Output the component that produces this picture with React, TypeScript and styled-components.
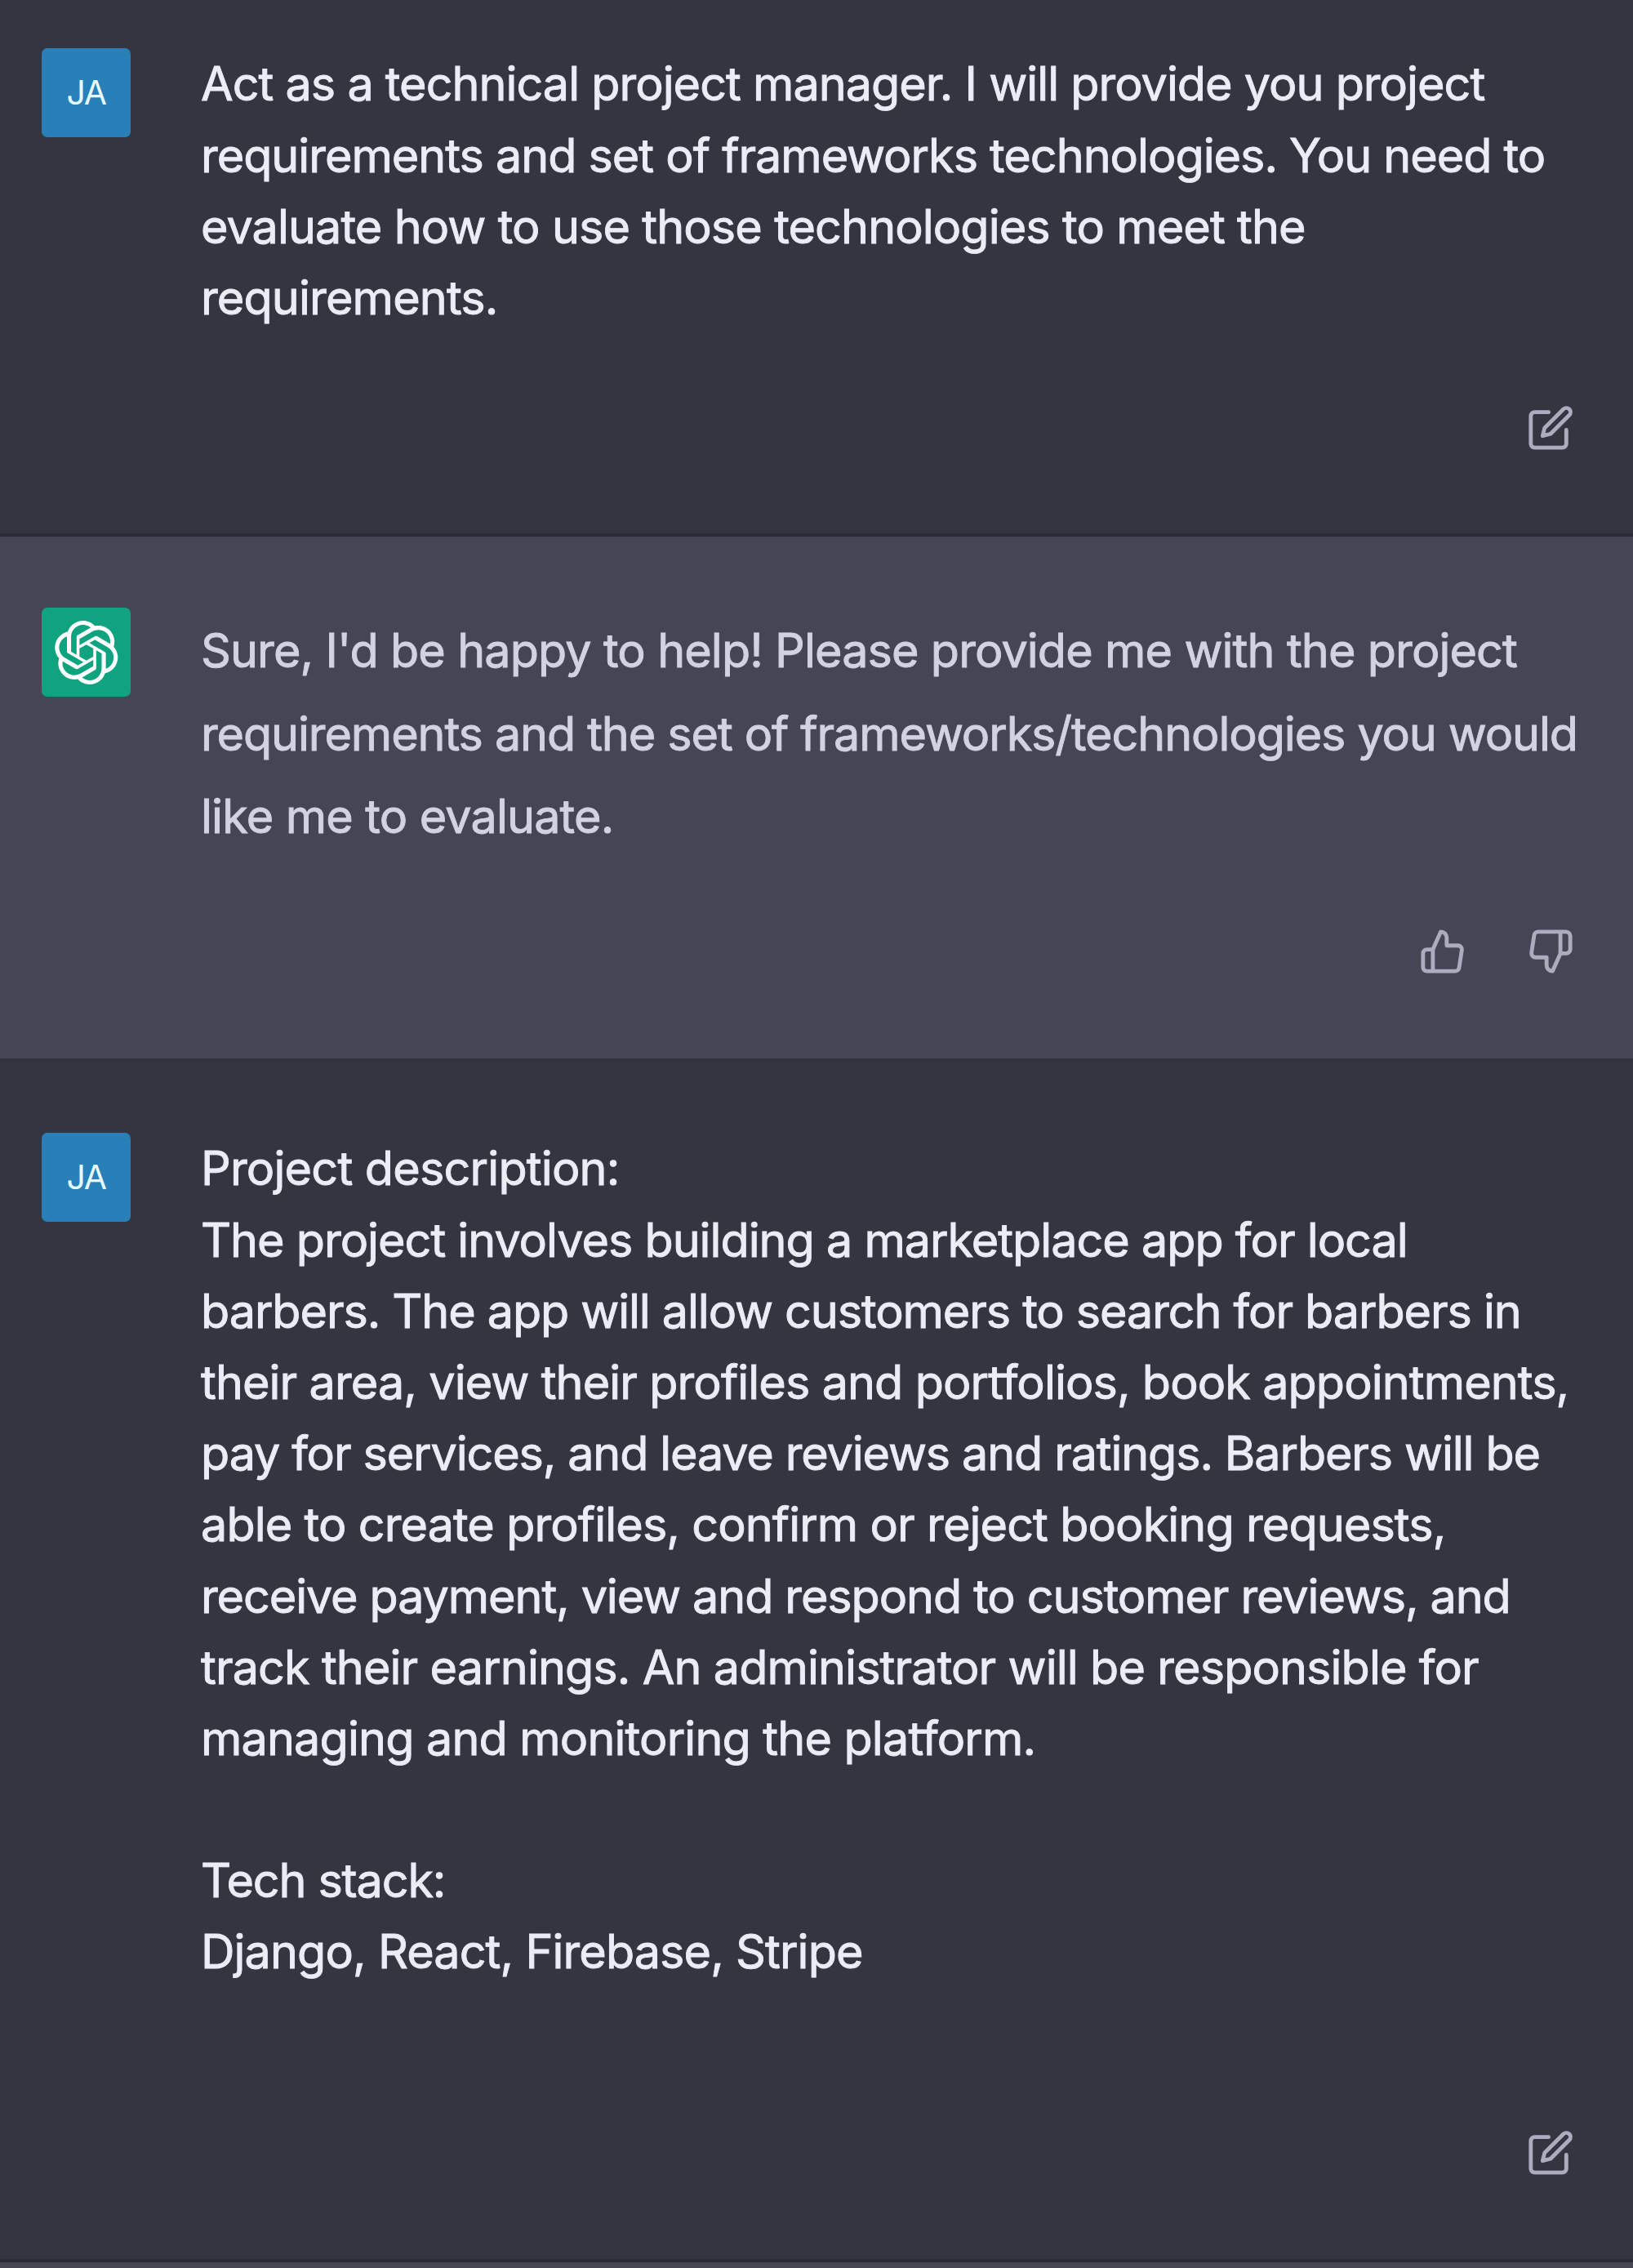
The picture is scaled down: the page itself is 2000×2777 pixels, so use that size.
import React from "react";
import styled, { createGlobalStyle } from "styled-components";

const GlobalStyle = createGlobalStyle`
  body {
    margin: 0;
    background: #343541;
    font-family: Inter, "Liberation Sans", sans-serif;
  }
`;

type Role = "user" | "assistant";

const Thread = styled.main`
  width: 2000px;
  height: 2777px;
  overflow: hidden;
  display: flex;
  flex-direction: column;
`;

const Message = styled.section<{ $role: Role; $height: number; $top: number }>`
  flex: none;
  box-sizing: border-box;
  height: ${(p) => p.$height}px;
  padding: ${(p) => p.$top}px 72px 0 51px;
  display: flex;
  align-items: flex-start;
  gap: 86px;
  background: ${(p) => (p.$role === "user" ? "#353541" : "#444654")};
  border-bottom: 4px solid ${(p) => (p.$role === "user" ? "#2b2b36" : "#32333e")};
`;

const Avatar = styled.div<{ $role: Role }>`
  flex: none;
  width: 109px;
  height: 109px;
  border-radius: 7px;
  display: flex;
  align-items: center;
  justify-content: center;
  background: ${(p) => (p.$role === "user" ? "#2980b9" : "#10a37f")};
  color: #e6fbff;
`;

const Initials = styled.span`
  font-size: 41px;
  line-height: 1;
  letter-spacing: -1.5px;
`;

const Body = styled.div`
  flex: 1;
  min-width: 0;
  display: flex;
  flex-direction: column;
`;

const Copy = styled.div<{ $role: Role }>`
  font-size: 57.5px;
  line-height: ${(p) => (p.$role === "user" ? 87.2 : 101.7)}px;
  color: ${(p) => (p.$role === "user" ? "#ececf6" : "#d2d3e0")};
  -webkit-text-stroke: 0.9px currentColor;
  padding-top: ${(p) => (p.$role === "user" ? 0.4 : 1.8)}px;
`;

const Line = styled.div<{ $tracking: number }>`
  height: 1lh;
  white-space: pre;
  letter-spacing: ${(p) => p.$tracking}px;
`;

const Actions = styled.div<{ $gap: number }>`
  display: flex;
  justify-content: flex-end;
  gap: 74px;
  margin-top: ${(p) => p.$gap}px;
`;

const Icon = styled.svg`
  width: 58px;
  height: 58px;
  fill: none;
  stroke: #acacbe;
  stroke-width: 2;
  stroke-linecap: round;
  stroke-linejoin: round;
`;

const Logo = styled.svg`
  width: 80px;
  height: 80px;
  fill: #fff;
`;

const EditIcon = () => (
  <Icon viewBox="0 0 24 24">
    <path d="M11 4H4a2 2 0 0 0-2 2v14a2 2 0 0 0 2 2h14a2 2 0 0 0 2-2v-7" />
    <path d="M18.5 2.5a2.121 2.121 0 0 1 3 3L12 15l-4 1 1-4 9.5-9.5z" />
  </Icon>
);

const ThumbUpIcon = () => (
  <Icon viewBox="0 0 24 24">
    <path d="M14 9V5a3 3 0 0 0-3-3l-4 9v11h11.28a2 2 0 0 0 2-1.7l1.38-9a2 2 0 0 0-2-2.3zM7 22H4a2 2 0 0 1-2-2v-7a2 2 0 0 1 2-2h3" />
  </Icon>
);

const ThumbDownIcon = () => (
  <Icon viewBox="0 0 24 24">
    <path d="M10 15v4a3 3 0 0 0 3 3l4-9V2H5.72a2 2 0 0 0-2 1.7l-1.38 9a2 2 0 0 0 2 2.3zm7-13h2.67A2.31 2.31 0 0 1 22 4v7a2.31 2.31 0 0 1-2.33 2H17" />
  </Icon>
);

const BotLogo = () => (
  <Logo viewBox="0 0 41 41">
    <path d="M37.532 16.8707C37.9808 15.5241 38.1363 14.0974 37.9886 12.6859C37.8409 11.2744 37.3934 9.91076 36.676 8.68622C35.6126 6.83404 33.9882 5.3676 32.0373 4.4985C30.0864 3.62941 27.9098 3.40259 25.8215 3.85078C24.8796 2.7893 23.7219 1.94125 22.4257 1.36341C21.1295 0.785575 19.7249 0.491269 18.3058 0.500197C16.1708 0.495044 14.0893 1.16803 12.3614 2.42214C10.6335 3.67624 9.34853 5.44666 8.6917 7.47815C7.30085 7.76286 5.98686 8.3414 4.8377 9.17505C3.68854 10.0087 2.73073 11.0782 2.02839 12.312C0.956464 14.1591 0.498905 16.2988 0.721698 18.4228C0.944492 20.5467 1.83612 22.5449 3.268 24.1293C2.81966 25.4759 2.66413 26.9026 2.81182 28.3141C2.95951 29.7256 3.40701 31.0892 4.12437 32.3138C5.18791 34.1659 6.8123 35.6322 8.76321 36.5013C10.7141 37.3704 12.8907 37.5973 14.9789 37.1492C15.9208 38.2107 17.0786 39.0587 18.3747 39.6366C19.6709 40.2144 21.0755 40.5087 22.4946 40.4998C24.6307 40.5054 26.7133 39.8321 28.4418 38.5772C30.1704 37.3223 31.4556 35.5506 32.1119 33.5179C33.5027 33.2332 34.8167 32.6547 35.9659 31.821C37.115 30.9874 38.0728 29.9178 38.7752 28.684C39.8458 26.8371 40.3023 24.6979 40.0789 22.5748C39.8556 20.4517 38.9639 18.4544 37.532 16.8707ZM22.4978 37.8849C20.7443 37.8874 19.0459 37.2733 17.6994 36.1501C17.7601 36.117 17.8666 36.0586 17.936 36.0161L25.9004 31.4156C26.1003 31.3019 26.2663 31.137 26.3813 30.9378C26.4964 30.7386 26.5563 30.5124 26.5549 30.2825V19.0542L29.9213 20.998C29.9389 21.0068 29.9541 21.0198 29.9656 21.0359C29.977 21.052 29.9842 21.0707 29.9867 21.0902V30.3889C29.9842 32.375 29.1946 34.2791 27.7909 35.6841C26.3872 37.0892 24.4838 37.8806 22.4978 37.8849ZM6.39227 31.0064C5.51397 29.4888 5.19742 27.7107 5.49804 25.9832C5.55718 26.0187 5.66048 26.0818 5.73461 26.1244L13.699 30.7248C13.8975 30.8408 14.1233 30.902 14.3532 30.902C14.583 30.902 14.8088 30.8408 15.0073 30.7248L24.731 25.1103V28.9979C24.7321 29.0177 24.7283 29.0376 24.7199 29.0556C24.7115 29.0736 24.6988 29.0893 24.6829 29.1012L16.6317 33.7497C14.9096 34.7416 12.8643 35.0097 10.9447 34.4954C9.02506 33.9811 7.38785 32.7263 6.39227 31.0064ZM4.29707 13.6194C5.17156 12.0998 6.55279 10.9364 8.19885 10.3327C8.19885 10.4013 8.19491 10.5228 8.19491 10.6071V19.808C8.19351 20.0378 8.25334 20.2638 8.36823 20.4629C8.48312 20.6619 8.64893 20.8267 8.84863 20.9404L18.5723 26.5542L15.206 28.4979C15.1894 28.5089 15.1703 28.5155 15.1505 28.5173C15.1307 28.5191 15.1107 28.516 15.0924 28.5082L7.04046 23.8557C5.32135 22.8601 4.06716 21.2235 3.55289 19.3046C3.03862 17.3858 3.30624 15.3413 4.29707 13.6194ZM31.955 20.0556L22.2312 14.4411L25.5976 12.4981C25.6142 12.4872 25.6333 12.4805 25.6531 12.4787C25.6729 12.4769 25.6928 12.4801 25.7111 12.4879L33.7631 17.1364C34.9967 17.849 36.0017 18.8982 36.6606 20.1613C37.3194 21.4244 37.6047 22.849 37.4832 24.2684C37.3617 25.6878 36.8382 27.0432 35.9743 28.1759C35.1103 29.3086 33.9415 30.1717 32.6047 30.6641C32.6047 30.5947 32.6047 30.4733 32.6047 30.3889V21.188C32.6066 20.9586 32.5474 20.7328 32.4332 20.5338C32.319 20.3348 32.154 20.1698 31.955 20.0556ZM35.3055 15.0128C35.2464 14.9765 35.1431 14.9142 35.069 14.8717L27.1045 10.2712C26.906 10.1554 26.6803 10.0943 26.4504 10.0943C26.2206 10.0943 25.9948 10.1554 25.7963 10.2712L16.0726 15.8858V11.9982C16.0715 11.9783 16.0753 11.9585 16.0837 11.9405C16.0921 11.9225 16.1048 11.9068 16.1207 11.8949L24.1719 7.25025C25.4053 6.53903 26.8158 6.19376 28.2383 6.25482C29.6608 6.31589 31.0364 6.78077 32.2044 7.59508C33.3723 8.40939 34.2842 9.53945 34.8334 10.8531C35.3826 12.1667 35.5464 13.6095 35.3055 15.0128ZM14.2424 21.9419L10.8752 19.9981C10.8576 19.9893 10.8423 19.9763 10.8309 19.9602C10.8195 19.9441 10.8122 19.9254 10.8098 19.9058V10.6071C10.8107 9.18295 11.2173 7.78848 11.9819 6.58696C12.7466 5.38544 13.8377 4.42659 15.1275 3.82264C16.4173 3.21869 17.8524 2.99464 19.2649 3.1767C20.6775 3.35876 22.0089 3.93941 23.1034 4.85067C23.0427 4.88379 22.937 4.94215 22.8668 4.98473L14.9024 9.58517C14.7025 9.69878 14.5366 9.86356 14.4215 10.0626C14.3065 10.2616 14.2466 10.4877 14.2479 10.7175L14.2424 21.9419ZM16.071 17.9991L20.4018 15.4978L24.7325 17.9975V22.9985L20.4018 25.4983L16.071 22.9985V17.9991Z" />
  </Logo>
);

interface Entry {
  role: Role;
  height: number;
  top: number;
  actionsGap: number;
  /** Each line of copy with its letter-spacing in pixels. */
  lines: [string, number][];
}

const entries: Entry[] = [
  {
    role: "user",
    height: 657,
    top: 59,
    actionsGap: 86.4,
    lines: [
      ["Act as a technical project manager. I will provide you project", -0.99],
      ["requirements and set of frameworks technologies. You need to", -1.02],
      ["evaluate how to use those technologies to meet the", -0.91],
      ["requirements.", -0.85],
    ],
  },
  {
    role: "assistant",
    height: 643,
    top: 87.3,
    actionsGap: 85,
    lines: [
      ["Sure, I'd be happy to help! Please provide me with the project", -0.9],
      ["requirements and the set of frameworks/technologies you would", -1.1],
      ["like me to evaluate.", -0.83],
    ],
  },
  {
    role: "user",
    height: 1470,
    top: 87,
    actionsGap: 173.4,
    lines: [
      ["Project description:", -0.8],
      ["The project involves building a marketplace app for local", -1.01],
      ["barbers. The app will allow customers to search for barbers in", -1.09],
      ["their area, view their profiles and portfolios, book appointments,", -0.91],
      ["pay for services, and leave reviews and ratings. Barbers will be", -1.14],
      ["able to create profiles, confirm or reject booking requests,", -0.91],
      ["receive payment, view and respond to customer reviews, and", -1.1],
      ["track their earnings. An administrator will be responsible for", -0.9],
      ["managing and monitoring the platform.", -0.84],
      ["", 0],
      ["Tech stack:", -1.15],
      ["Django, React, Firebase, Stripe", -0.91],
    ],
  },
];

const NextMessage = styled.div`
  flex: 1;
  background: #444654;
`;

export default function App() {
  return (
    <>
      <GlobalStyle />
      <Thread>
        {entries.map((entry, i) => (
          <Message key={i} $role={entry.role} $height={entry.height} $top={entry.top}>
            <Avatar $role={entry.role}>
              {entry.role === "user" ? <Initials>JA</Initials> : <BotLogo />}
            </Avatar>
            <Body>
              <Copy $role={entry.role}>
                {entry.lines.map(([text, tracking], n) => (
                  <Line key={n} $tracking={tracking}>
                    {text}
                  </Line>
                ))}
              </Copy>
              <Actions $gap={entry.actionsGap}>
                {entry.role === "user" ? (
                  <EditIcon />
                ) : (
                  <>
                    <ThumbUpIcon />
                    <ThumbDownIcon />
                  </>
                )}
              </Actions>
            </Body>
          </Message>
        ))}
        <NextMessage />
      </Thread>
    </>
  );
}
